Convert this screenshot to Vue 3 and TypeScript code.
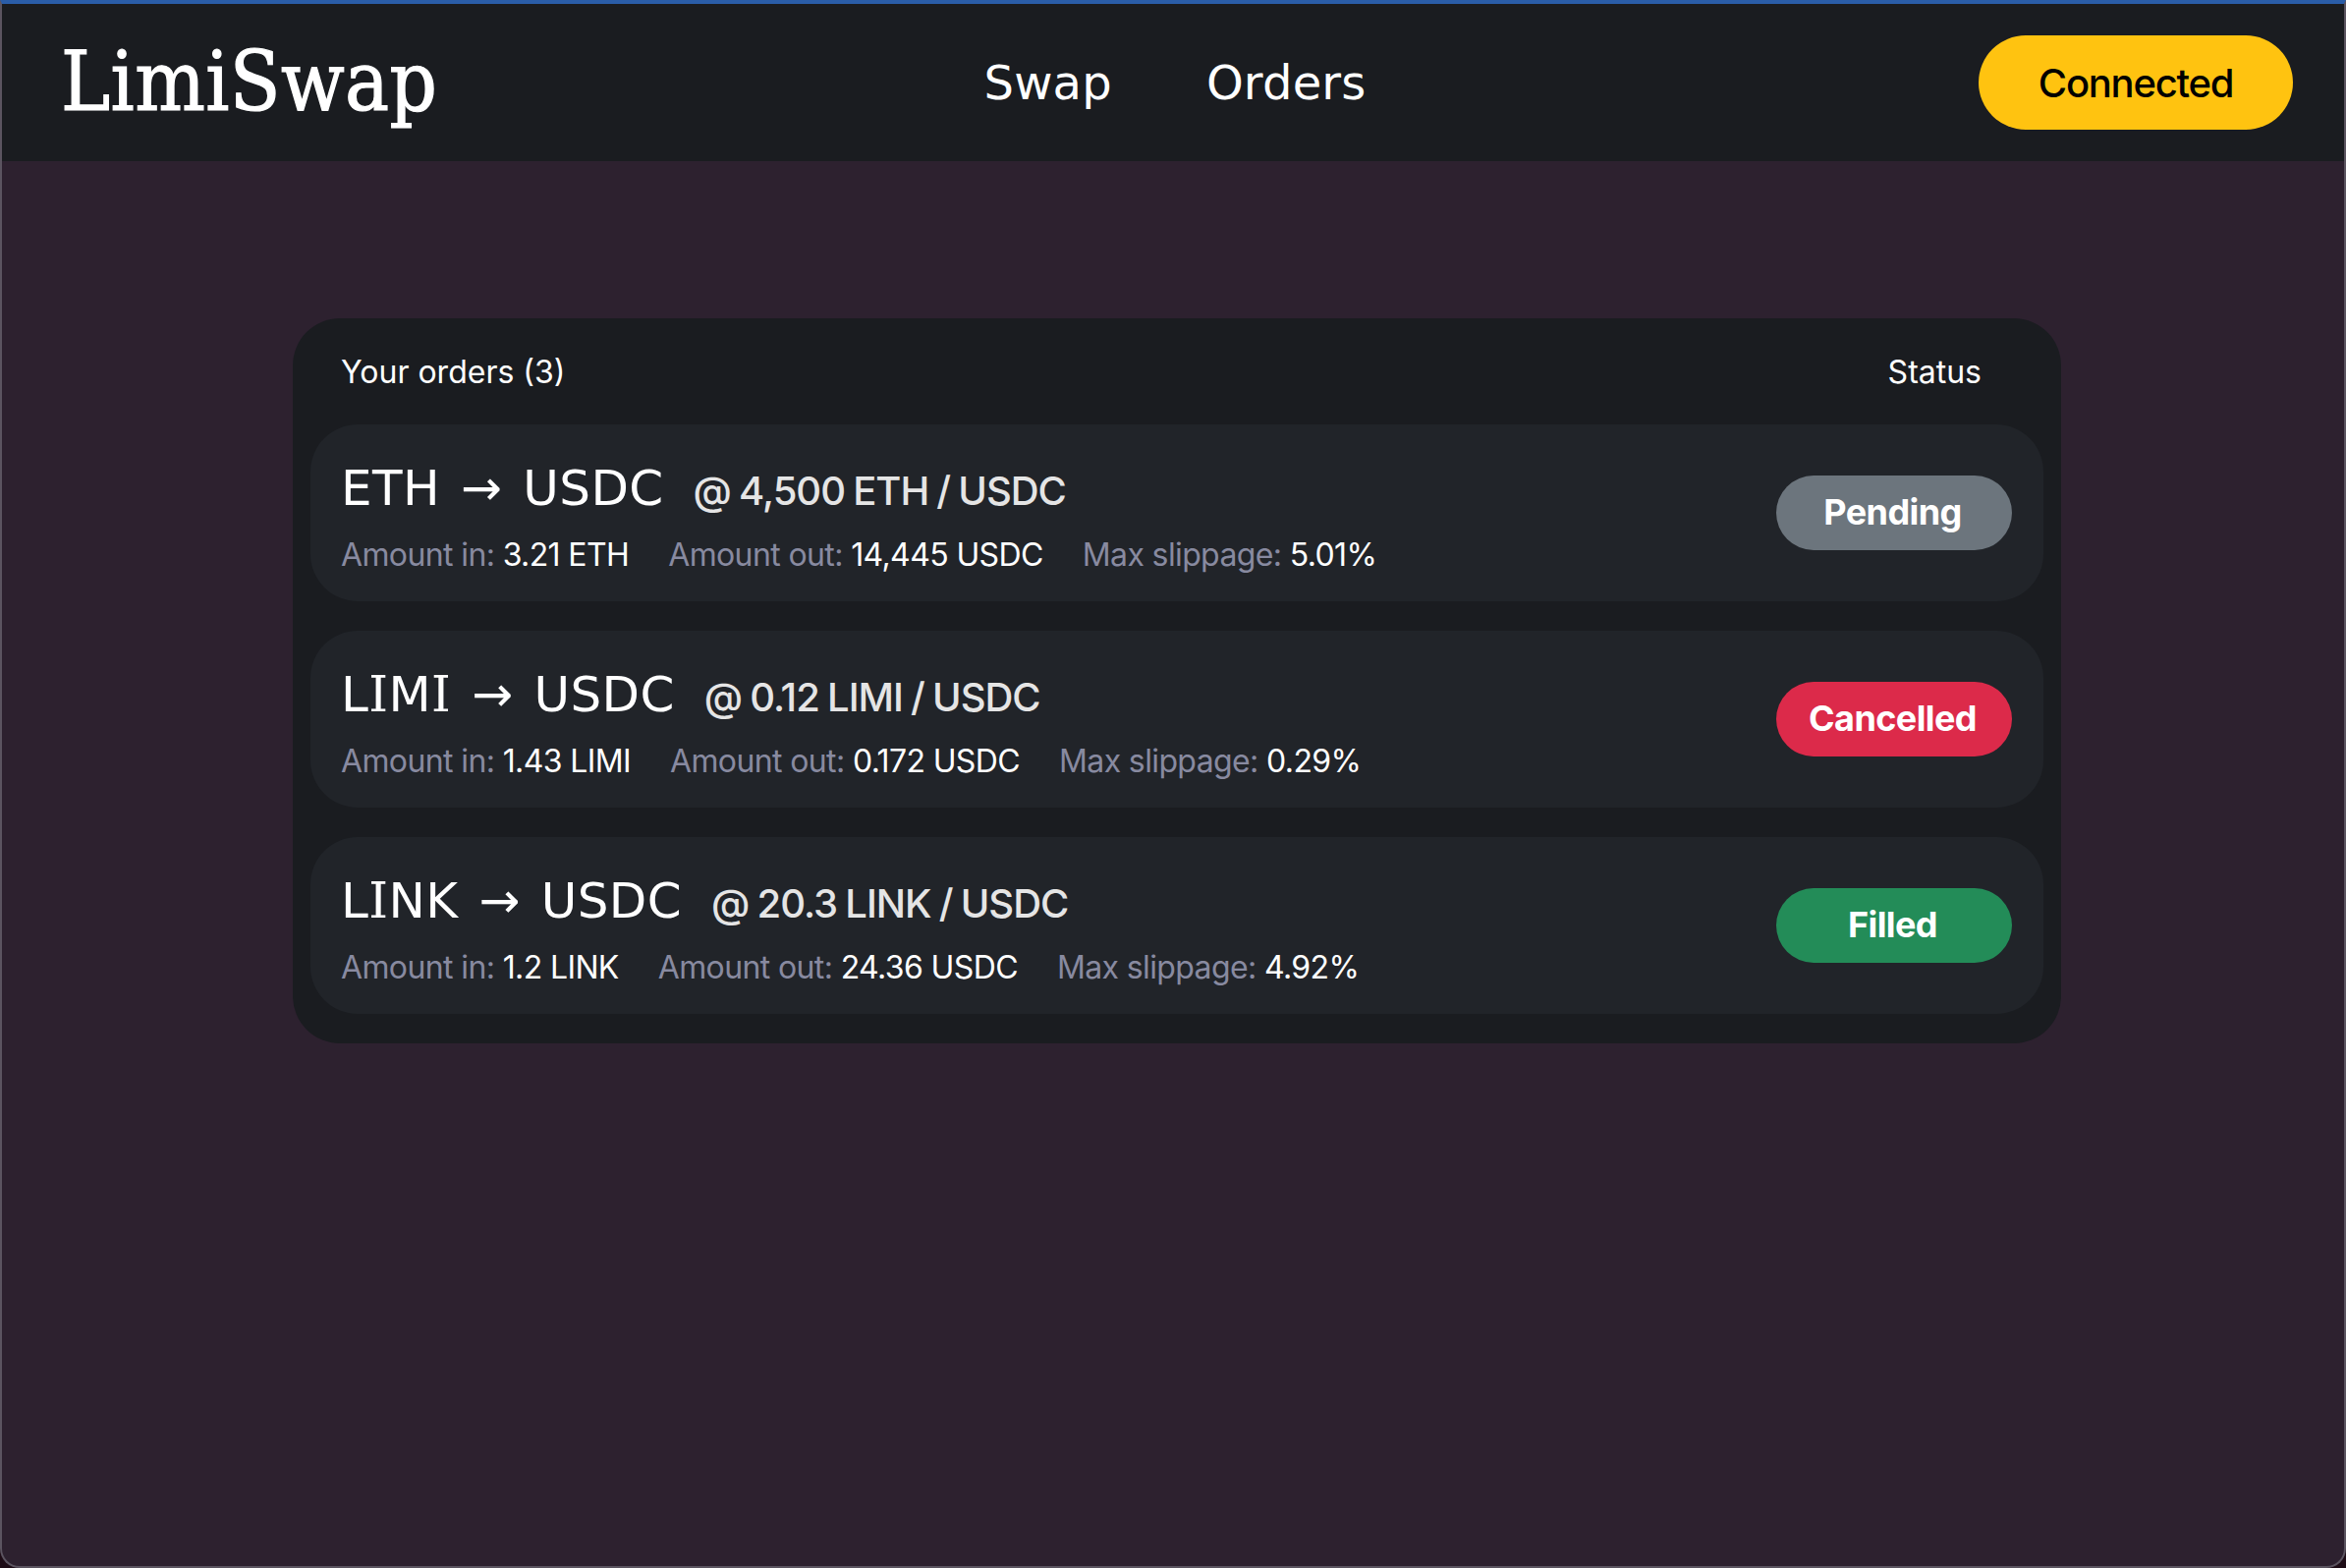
<script setup lang="ts">
interface Order {
  from: string
  rate: string
  amountIn: string
  amountOut: string
  slippage: string
  status: string
  tone: string
}

const orders: Order[] = [
  { from: 'ETH', rate: '@ 4,500 ETH / USDC', amountIn: '3.21 ETH', amountOut: '14,445 USDC', slippage: '5.01%', status: 'Pending', tone: 'pending' },
  { from: 'LIMI', rate: '@ 0.12 LIMI / USDC', amountIn: '1.43 LIMI', amountOut: '0.172 USDC', slippage: '0.29%', status: 'Cancelled', tone: 'cancelled' },
  { from: 'LINK', rate: '@ 20.3 LINK / USDC', amountIn: '1.2 LINK', amountOut: '24.36 USDC', slippage: '4.92%', status: 'Filled', tone: 'filled' },
]

// The reference face has a slab-serif capital I, which DejaVu Sans lacks.
const letters = (word: string): string[] => word.split('')
</script>

<template>
  <div class="window">
    <header class="topbar">
      <div class="logo">LimiSwap</div>
      <nav class="nav">
        <a>Swap</a>
        <a>Orders</a>
      </nav>
      <div class="actions"><button class="connect">Connected</button></div>
    </header>
    <main class="content">
      <section class="card">
        <div class="card-head">
          <span>Your orders (3)</span>
          <span>Status</span>
        </div>
        <div class="rows">
          <article v-for="o in orders" :key="o.from" class="row">
            <div class="info">
              <div class="title">
                <span class="pair"><span v-for="(c, i) in letters(o.from)" :key="i" :class="{ slab: c === 'I' }">{{ c }}</span><span class="arrow">→</span>USDC</span>
                <span class="rate">{{ o.rate }}</span>
              </div>
              <div class="meta">
                <span><i>Amount in:</i> {{ o.amountIn }}</span>
                <span><i>Amount out:</i> {{ o.amountOut }}</span>
                <span><i>Max slippage:</i> {{ o.slippage }}</span>
              </div>
            </div>
            <span class="badge" :class="o.tone">{{ o.status }}</span>
          </article>
        </div>
      </section>
    </main>
  </div>
</template>

<style>
html, body { margin: 0; background: #1d0c16; }
</style>

<style scoped>
.window {
  box-sizing: border-box;
  height: 1596px;
  background: #2d212f;
  border-top: 4px solid #2a5da8;
  border-left: 2px solid #5b5460;
  border-right: 2px solid #5b5460;
  border-bottom: 2px solid #5b5460;
  border-radius: 0 0 20px 20px;
  overflow: hidden;
  font-family: Inter, "Liberation Sans", sans-serif;
  color: #fff;
}
.topbar {
  box-sizing: border-box;
  height: 160px;
  background: #1a1c20;
  display: grid;
  grid-template-columns: 1fr auto 1fr;
  align-items: center;
  padding: 0 54px 0 58px;
}
.logo {
  font-family: "DejaVu Serif Condensed", "DejaVu Serif", serif;
  font-size: 84px;
  line-height: 1;
  letter-spacing: 0.4px;
  margin: -2px 0 0 2px;
  -webkit-text-stroke: 1.2px #fff;
}
.nav {
  display: flex;
  gap: 96px;
  font-family: "DejaVu Sans", sans-serif;
  font-size: 48px;
  letter-spacing: 0.2px;
}
.actions { display: flex; justify-content: flex-end; }
.connect {
  width: 320px;
  height: 96px;
  border: 0;
  border-radius: 48px;
  background: #ffc310;
  color: #000;
  font: 500 40px Inter, sans-serif;
  letter-spacing: -1.25px;
  margin-right: -2px;
}
.content {
  display: flex;
  justify-content: center;
  padding: 160px 0 0 8px;
}
.card {
  box-sizing: border-box;
  width: 1800px;
  height: 738px;
  padding: 18px;
  background: #1a1c20;
  border-radius: 48px;
}
.card-head {
  display: flex;
  justify-content: space-between;
  height: 72px;
  padding: 0 63px 18px 31px;
  align-items: center;
  font-size: 32px;
}
.rows { display: flex; flex-direction: column; gap: 30px; }
.row {
  box-sizing: border-box;
  height: 180px;
  background: #212429;
  border-radius: 48px;
  display: flex;
  justify-content: space-between;
  align-items: center;
  padding: 0 32px 0 31px;
}
.info { padding-top: 8px; }
.title { display: flex; align-items: baseline; gap: 30px; }
.pair {
  font-family: "DejaVu Sans", sans-serif;
  font-size: 50px;
  letter-spacing: 0.4px;
}
.slab { font-family: "DejaVu Serif", serif; font-weight: 400; }
.arrow { margin: 0 21px; }
.rate {
  font-size: 40px;
  font-weight: 500;
  color: #e5e5e5;
  letter-spacing: -1px;
  word-spacing: -1.5px;
}
.meta {
  display: flex;
  gap: 40px;
  font-size: 32px;
  letter-spacing: -0.62px;
  margin-top: 19px;
}
.meta i { font-style: normal; color: #888aa0; }
.badge {
  box-sizing: border-box;
  width: 240px;
  height: 76px;
  padding: 0 3px 2px 0;
  border-radius: 38px;
  display: flex;
  align-items: center;
  justify-content: center;
  font-size: 36px;
  font-weight: 700;
  letter-spacing: -0.6px;
}
.pending { background: #6c757d; }
.cancelled { background: #dc2a4a; }
.filled { background: #238c58; }
</style>
